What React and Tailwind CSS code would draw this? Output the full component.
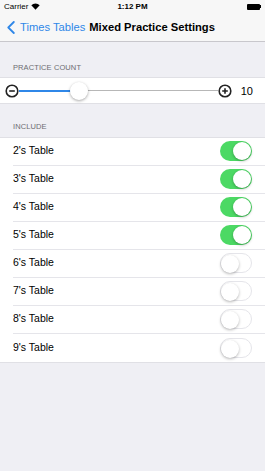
import React, { useState } from "react";

const font = { fontFamily: '"Liberation Sans", Arial, sans-serif' };

const Toggle = ({ on, onClick }) => (
  <button
    onClick={onClick}
    className={`relative w-[32px] h-[20px] rounded-full transition-colors ${
      on ? "bg-[#4cd964]" : "bg-white border border-[#e5e5ea]"
    }`}
  >
    <span
      className={`absolute top-[1px] w-[18px] h-[18px] rounded-full bg-white shadow-[0_1px_3px_rgba(0,0,0,0.3)] ${
        on ? "right-[1px]" : "left-0 top-0"
      }`}
    />
  </button>
);

const App = () => {
  const [tables, setTables] = useState([true, true, true, true, false, false, false, false]);

  const flip = (i) => {
    setTables(tables.map((t, j) => (j === i ? !t : t)));
  };

  return (
    <div className="w-[265px] h-[471px] bg-[#efeff4] overflow-hidden" style={font}>
      {/* Status bar + nav */}
      <div className="bg-[#f7f7f7] border-b border-[#c8c7cc]">
        <div className="h-[13px] flex items-center justify-between px-[4px] text-[8px] text-black relative">
          <div className="flex items-center gap-[3px]">
            <span>Carrier</span>
            <svg width="9" height="7" viewBox="0 0 9 7">
              <path d="M0.3 2.3 A6 6 0 0 1 8.7 2.3 L4.5 6.8 Z" fill="#000" />
            </svg>
          </div>
          <span className="absolute left-1/2 -translate-x-1/2 font-bold">1:12 PM</span>
          <div className="flex items-center">
            <div className="w-[13px] h-[6px] bg-black rounded-[1px]" />
            <div className="w-[1px] h-[3px] bg-black" />
          </div>
        </div>
        <div className="h-[28px] flex items-center pl-[7px]">
          <svg width="8" height="13" viewBox="0 0 8 13" className="mr-[5px]">
            <path d="M6.8 1 L1.3 6.5 L6.8 12" stroke="#2f87e8" strokeWidth="1.8" fill="none" strokeLinecap="round" strokeLinejoin="round" />
          </svg>
          <span className="text-[11.2px] text-[#2f87e8]">Times Tables</span>
          <span className="ml-[4px] text-[11.2px] font-bold text-black">Mixed Practice Settings</span>
        </div>
      </div>

      {/* Practice count */}
      <div className="pt-[20px] pb-[4px] px-[13px] text-[7.5px] text-[#6d6d72] tracking-[0.1px]">PRACTICE COUNT</div>
      <div className="bg-white h-[27px] flex items-center pl-[5px] pr-[12px] border-y border-[#e0e0e5]">
        <svg width="14" height="14" viewBox="0 0 14 14">
          <circle cx="7" cy="7" r="5.8" stroke="#222" strokeWidth="1.6" fill="none" />
          <path d="M4.2 7 H9.8" stroke="#222" strokeWidth="1.6" />
        </svg>
        <div className="relative flex-1 h-[20px] flex items-center">
          <div className="w-[60px] h-[1.5px] bg-[#2f87e8]" />
          <div className="flex-1 h-[1px] bg-[#b7b7b7]" />
          <div className="absolute left-[51px] w-[18px] h-[18px] rounded-full bg-white shadow-[0_1px_3px_rgba(0,0,0,0.35)]" />
        </div>
        <svg width="14" height="14" viewBox="0 0 14 14">
          <circle cx="7" cy="7" r="5.8" stroke="#222" strokeWidth="1.6" fill="none" />
          <path d="M4.2 7 H9.8 M7 4.2 V9.8" stroke="#222" strokeWidth="1.6" />
        </svg>
        <span className="ml-[9px] text-[11px] text-black">10</span>
      </div>

      {/* Include */}
      <div className="pt-[17px] pb-[4px] px-[13px] text-[7.5px] text-[#6d6d72] tracking-[0.1px]">INCLUDE</div>
      <div className="bg-white border-y border-[#e0e0e5]">
        {tables.map((on, i) => (
          <div key={i} className="pl-[13px]">
            <div
              className={`h-[28px] flex items-center justify-between pr-[13px] ${
                i < tables.length - 1 ? "border-b border-[#e5e5ea]" : ""
              }`}
            >
              <span className="text-[10.5px] text-black">{i + 2}'s Table</span>
              <Toggle on={on} onClick={() => flip(i)} />
            </div>
          </div>
        ))}
      </div>
    </div>
  );
};

export default App;
